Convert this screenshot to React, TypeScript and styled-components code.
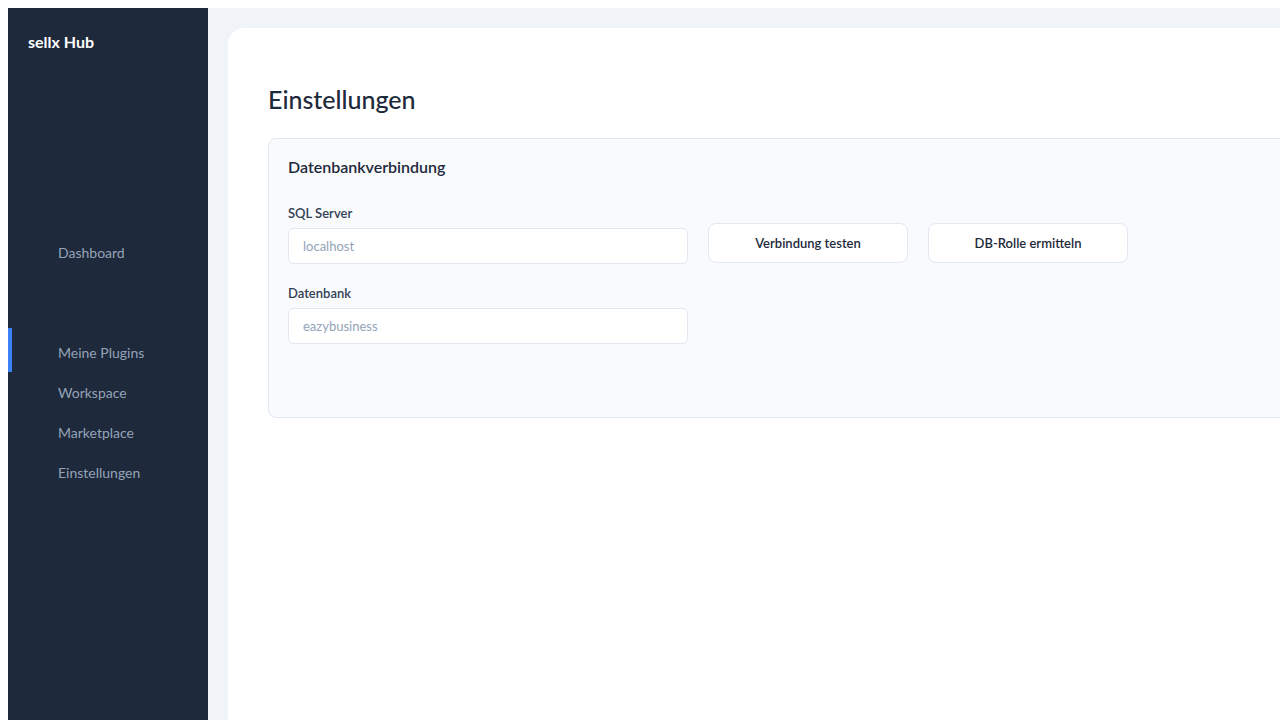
import React from 'react';
import styled, { createGlobalStyle } from 'styled-components';

const GlobalStyle = createGlobalStyle`
  html {
    overflow: hidden;
  }
  body {
    margin: 8px 0 0 8px;
    font-family: "Segoe UI", Lato, "Noto Sans", sans-serif;
    background: #ffffff;
  }
  * {
    box-sizing: border-box;
  }
`;

const Layout = styled.div`
  display: flex;
  width: calc(100vw + 40px);
  height: 100vh;
`;

const Sidebar = styled.aside`
  width: 200px;
  flex-shrink: 0;
  background: #1e293b;
  display: flex;
  flex-direction: column;
`;

const Logo = styled.div`
  padding: 24px 20px 0;
  height: 224px;
  font-size: 16px;
  line-height: 20px;
  font-weight: 700;
  color: #ffffff;
`;

const Nav = styled.nav`
  display: flex;
  flex-direction: column;
`;

const NavSpacer = styled.div`
  height: 60px;
`;

const NavItem = styled.a<{ $active?: boolean }>`
  position: relative;
  display: flex;
  align-items: center;
  height: 40px;
  padding-left: 50px;
  font-size: 14px;
  color: #94a3b8;
  text-decoration: none;
  cursor: pointer;

  &::before {
    content: '';
    display: ${(p) => (p.$active ? 'block' : 'none')};
    position: absolute;
    left: 0;
    top: -4px;
    width: 4px;
    height: 44px;
    background: #3b82f6;
  }
`;

const Main = styled.main`
  flex: 1;
  background: #f0f4f8;
  padding: 20px 0 0 20px;
  display: flex;
`;

const Panel = styled.section`
  flex: 1;
  background: #ffffff;
  border-radius: 16px 0 0 0;
  padding: 55px 40px 40px;
`;

const PageTitle = styled.h1`
  margin: 0 0 23px;
  font-size: 25px;
  line-height: 32px;
  font-weight: 500;
  color: #1e293b;
`;

const Card = styled.div`
  background: #f8fafc;
  border: 1px solid #e2e8f0;
  border-radius: 8px;
  padding: 17px 19px 73px;
`;

const CardTitle = styled.h2`
  margin: 0 0 26px;
  font-size: 16px;
  line-height: 22px;
  font-weight: 600;
  color: #1e293b;
`;

const Row = styled.div`
  display: flex;
  align-items: flex-end;
  gap: 20px;
  & + & {
    margin-top: 20px;
  }
`;

const Field = styled.div`
  display: flex;
  flex-direction: column;
  width: 400px;
`;

const Label = styled.label`
  font-size: 13px;
  line-height: 18px;
  font-weight: 600;
  color: #334155;
  margin-bottom: 6px;
`;

const Input = styled.input`
  height: 36px;
  border: 1px solid #e2e8f0;
  border-radius: 6px;
  background: #ffffff;
  padding: 0 14px;
  font-family: inherit;
  font-size: 13px;
  color: #1e293b;
  outline: none;

  &::placeholder {
    color: #94a3b8;
  }
`;

const Button = styled.button`
  width: 200px;
  height: 40px;
  margin-bottom: 1px;
  background: #ffffff;
  border: 1px solid #e2e8f0;
  border-radius: 8px;
  font-family: inherit;
  font-size: 13px;
  font-weight: 600;
  color: #1e293b;
  cursor: pointer;
`;

const navItems = ['Meine Plugins', 'Workspace', 'Marketplace', 'Einstellungen'];

export default function App() {
  return (
    <>
      <GlobalStyle />
      <Layout>
        <Sidebar>
          <Logo>sellx Hub</Logo>
          <Nav>
            <NavItem>Dashboard</NavItem>
            <NavSpacer />
            {navItems.map((item) => (
              <NavItem key={item} $active={item === 'Meine Plugins'}>
                {item}
              </NavItem>
            ))}
          </Nav>
        </Sidebar>
        <Main>
          <Panel>
            <PageTitle>Einstellungen</PageTitle>
            <Card>
              <CardTitle>Datenbankverbindung</CardTitle>
              <Row>
                <Field>
                  <Label>SQL Server</Label>
                  <Input placeholder="localhost" />
                </Field>
                <Button>Verbindung testen</Button>
                <Button>DB-Rolle ermitteln</Button>
              </Row>
              <Row>
                <Field>
                  <Label>Datenbank</Label>
                  <Input placeholder="eazybusiness" />
                </Field>
              </Row>
            </Card>
          </Panel>
        </Main>
      </Layout>
    </>
  );
}
